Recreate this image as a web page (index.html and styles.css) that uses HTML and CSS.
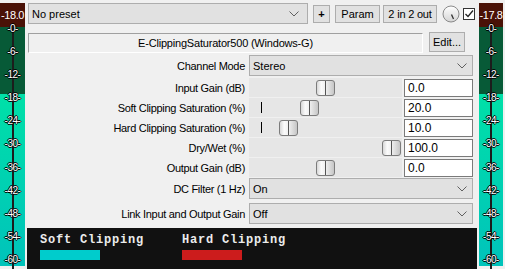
FILE: index.html
```html
<!DOCTYPE html>
<html lang="en">
<head>
  <meta charset="UTF-8">
  <title>E-ClippingSaturator500</title>
  <link rel="stylesheet" href="styles.css">
</head>
<body>

  <div class="window">
    <div class="meter">
      <div class="peak">-18.0</div>
      <div class="scale">
        <span>-0-</span><span>-6-</span><span>-12-</span><span>-18-</span>
        <span>-24-</span><span>-30-</span><span>-36-</span><span>-42-</span>
        <span>-48-</span><span>-54-</span><span>-60-</span>
      </div>
    </div>

    <div class="main">
      <div class="toolbar">
        <div class="combo preset">
          <span>No preset</span>
          <svg class="chev" width="10" height="6" viewBox="0 0 10 6"><path d="M0.5 0.5 L5 5 L9.5 0.5" fill="none" stroke="#606060" stroke-width="1"/></svg>
        </div>
        <button class="btn plus">+</button>
        <button class="btn param">Param</button>
        <button class="btn io">2 in 2 out</button>
        <svg class="knob" width="18" height="18" viewBox="0 0 18 18">
          <defs>
            <linearGradient id="kg" x1="0" y1="0" x2="0" y2="1">
              <stop offset="0" stop-color="#ffffff"/>
              <stop offset="1" stop-color="#d4d4d4"/>
            </linearGradient>
          </defs>
          <circle cx="9" cy="9" r="8" fill="url(#kg)" stroke="#8a8a8a" stroke-width="1"/>
          <path d="M9.5 9.5 L11.5 14" stroke="#303030" stroke-width="1.3"/>
        </svg>
        <span class="check">
          <svg width="12" height="12" viewBox="0 0 12 12"><path d="M2.5 6 L5 8.5 L10 2.5" fill="none" stroke="#222" stroke-width="1.3"/></svg>
        </span>
      </div>

      <div class="titlebar">
        <div class="fxname">E-ClippingSaturator500 (Windows-G)</div>
        <button class="btn edit">Edit...</button>
      </div>

      <div class="params">
        <div class="row row-combo">
          <label>Channel Mode</label>
          <div class="combo wide">
            <span>Stereo</span>
            <svg class="chev" width="10" height="6" viewBox="0 0 10 6"><path d="M0.5 0.5 L5 5 L9.5 0.5" fill="none" stroke="#606060" stroke-width="1"/></svg>
          </div>
        </div>

        <div class="row row-slider">
          <label>Input Gain (dB)</label>
          <div class="track"><span class="thumb" style="left: 67px"></span></div>
          <div class="field">0.0</div>
        </div>
        <div class="row row-slider">
          <label>Soft Clipping Saturation (%)</label>
          <div class="track"><span class="tick"></span><span class="thumb" style="left: 51px"></span></div>
          <div class="field">20.0</div>
        </div>
        <div class="row row-slider">
          <label>Hard Clipping Saturation (%)</label>
          <div class="track"><span class="tick"></span><span class="thumb" style="left: 30px"></span></div>
          <div class="field">10.0</div>
        </div>
        <div class="row row-slider">
          <label>Dry/Wet (%)</label>
          <div class="track"><span class="thumb" style="left: 133px"></span></div>
          <div class="field">100.0</div>
        </div>
        <div class="row row-slider">
          <label>Output Gain (dB)</label>
          <div class="track"><span class="thumb" style="left: 67px"></span></div>
          <div class="field">0.0</div>
        </div>

        <div class="row row-combo">
          <label>DC Filter (1 Hz)</label>
          <div class="combo wide">
            <span>On</span>
            <svg class="chev" width="10" height="6" viewBox="0 0 10 6"><path d="M0.5 0.5 L5 5 L9.5 0.5" fill="none" stroke="#606060" stroke-width="1"/></svg>
          </div>
        </div>
        <div class="row row-combo spaced">
          <label>Link Input and Output Gain</label>
          <div class="combo wide">
            <span>Off</span>
            <svg class="chev" width="10" height="6" viewBox="0 0 10 6"><path d="M0.5 0.5 L5 5 L9.5 0.5" fill="none" stroke="#606060" stroke-width="1"/></svg>
          </div>
        </div>
      </div>

      <div class="graph">
        <div class="legend">
          <span>Soft Clipping</span>
          <i class="bar soft"></i>
        </div>
        <div class="legend">
          <span>Hard Clipping</span>
          <i class="bar hard"></i>
        </div>
      </div>
    </div>

    <div class="meter right">
      <div class="peak">-17.8</div>
      <div class="scale">
        <span>-0-</span><span>-6-</span><span>-12-</span><span>-18-</span>
        <span>-24-</span><span>-30-</span><span>-36-</span><span>-42-</span>
        <span>-48-</span><span>-54-</span><span>-60-</span>
      </div>
    </div>
  </div>

</body>
</html>
```

FILE: styles.css
```css
body {
  margin: 0;
  height: 269px;
  overflow: hidden;
  background-color: #f0f0f0;
  font-family: "Liberation Sans", Arial, sans-serif;
  font-size: 11px;
  color: #000;
}

.window {
  display: flex;
  height: 269px;
}

/* level meters */
.meter {
  position: relative;
  width: 25px;
  height: 263px;
  margin-top: 3px;
  background: linear-gradient(to bottom, #075a37 0, #075a37 91px, #00e0a8 91px, #00c3bb 100%);
}

.meter.right {
  width: 24px;
  margin-left: 2px;
}

.meter::before {
  content: "";
  position: absolute;
  left: 12px;
  top: 24px;
  bottom: -3px;
  width: 2px;
  background-color: #1c1c1c;
}

.meter.right::before {
  left: 11px;
}

.peak {
  position: relative;
  height: 24px;
  line-height: 24px;
  background-color: #4a1207;
  color: #fff;
  text-align: center;
  font-size: 11px;
  letter-spacing: -0.4px;
  z-index: 1;
}

.scale {
  position: absolute;
  top: 14px;
  left: 0;
  right: 0;
  display: flex;
  flex-direction: column;
  z-index: 2;
}

.scale span {
  height: 23.1px;
  line-height: 23.1px;
  text-align: center;
  color: #fff;
  font-size: 10px;
  letter-spacing: -0.5px;
  text-shadow: 1px 0 0 #000, -1px 0 0 #000, 0 1px 0 #000, 0 -1px 0 #000;
}

/* main column */
.main {
  width: 450px;
  margin-left: 2px;
  padding-top: 3px;
  display: flex;
  flex-direction: column;
}

.toolbar {
  display: flex;
  align-items: center;
  height: 21px;
  margin-left: 1px;
}

.combo {
  display: flex;
  align-items: center;
  justify-content: space-between;
  box-sizing: border-box;
  background-color: #e1e1e1;
  border: 1px solid #adadad;
  padding: 0 5px 0 3px;
}

.combo.preset {
  width: 280px;
  height: 21px;
  padding-right: 8px;
}

.combo.wide {
  width: 224px;
  height: 21px;
}

.btn {
  box-sizing: border-box;
  height: 18px;
  padding: 0;
  margin-left: 5px;
  background-color: #e1e1e1;
  border: 1px solid #adadad;
  font-family: "Liberation Sans", Arial, sans-serif;
  font-size: 11px;
  color: #000;
}

.plus {
  width: 17px;
  font-weight: bold;
}

.param {
  width: 45px;
}

.io {
  width: 54px;
  margin-left: 3px;
  letter-spacing: -0.2px;
}

.knob {
  margin-left: 5px;
}

.check {
  display: flex;
  box-sizing: border-box;
  width: 12px;
  height: 12px;
  margin-left: 3px;
  border: 1px solid #333;
  background-color: #fff;
}

.check svg {
  margin: -1px;
}

/* fx name row */
.titlebar {
  display: flex;
  align-items: flex-start;
  height: 21px;
  margin-top: 8px;
  margin-left: 1px;
}

.fxname {
  box-sizing: border-box;
  width: 395px;
  height: 20px;
  margin-top: 1px;
  line-height: 18px;
  text-align: center;
  border-top: 1px solid #a0a0a0;
  border-left: 1px solid #a0a0a0;
  border-right: 1px solid #fff;
  border-bottom: 1px solid #fff;
  letter-spacing: -0.2px;
}

.edit {
  width: 36px;
  height: 20px;
  margin-left: 6px;
}

/* parameters */
.params {
  margin-top: 2px;
}

.row {
  display: flex;
  align-items: center;
}

.row label {
  width: 218px;
  padding-right: 4px;
  text-align: right;
  letter-spacing: -0.3px;
}

.row-combo {
  height: 21px;
}

.row-combo:first-child {
  margin-bottom: 2px;
}

.row-combo.spaced {
  margin-top: 4px;
}

.row-slider {
  height: 20px;
  align-items: flex-start;
}

.row-slider label {
  line-height: 20px;
}

.track {
  position: relative;
  width: 153px;
  height: 19px;
  background-color: #e6e6e6;
}

.thumb {
  position: absolute;
  top: 2px;
  box-sizing: border-box;
  width: 19px;
  height: 16px;
  border: 1px solid #7c7c7c;
  border-radius: 3px;
  background: linear-gradient(to right, #d8d8d8 0, #fbfbfb 25%, #f2f2f2 45%, #555 45%, #555 55%, #ececec 55%, #c6c6c6 100%);
}

.tick {
  position: absolute;
  left: 12px;
  top: 4px;
  width: 1px;
  height: 11px;
  background-color: #000;
}

.field {
  box-sizing: border-box;
  width: 69px;
  height: 18px;
  margin-left: 2px;
  margin-top: 1px;
  padding-left: 3px;
  line-height: 16px;
  background-color: #fff;
  border: 1px solid #7a7a7a;
  font-size: 12px;
}

/* clipping display */
.graph {
  flex: 1;
  margin-top: 4px;
  background-color: #111;
  display: flex;
  padding: 7px 0 0 13px;
}

.legend {
  display: flex;
  flex-direction: column;
  width: 142px;
}

.legend span {
  font-family: "Liberation Mono", "DejaVu Sans Mono", monospace;
  font-weight: bold;
  font-size: 12px;
  letter-spacing: 0.8px;
  color: #ececec;
  line-height: 11px;
}

.bar {
  display: block;
  width: 60px;
  height: 10px;
  margin-top: 4px;
}

.bar.soft {
  background-color: #00cccc;
}

.bar.hard {
  background-color: #cc1c1c;
}
```
